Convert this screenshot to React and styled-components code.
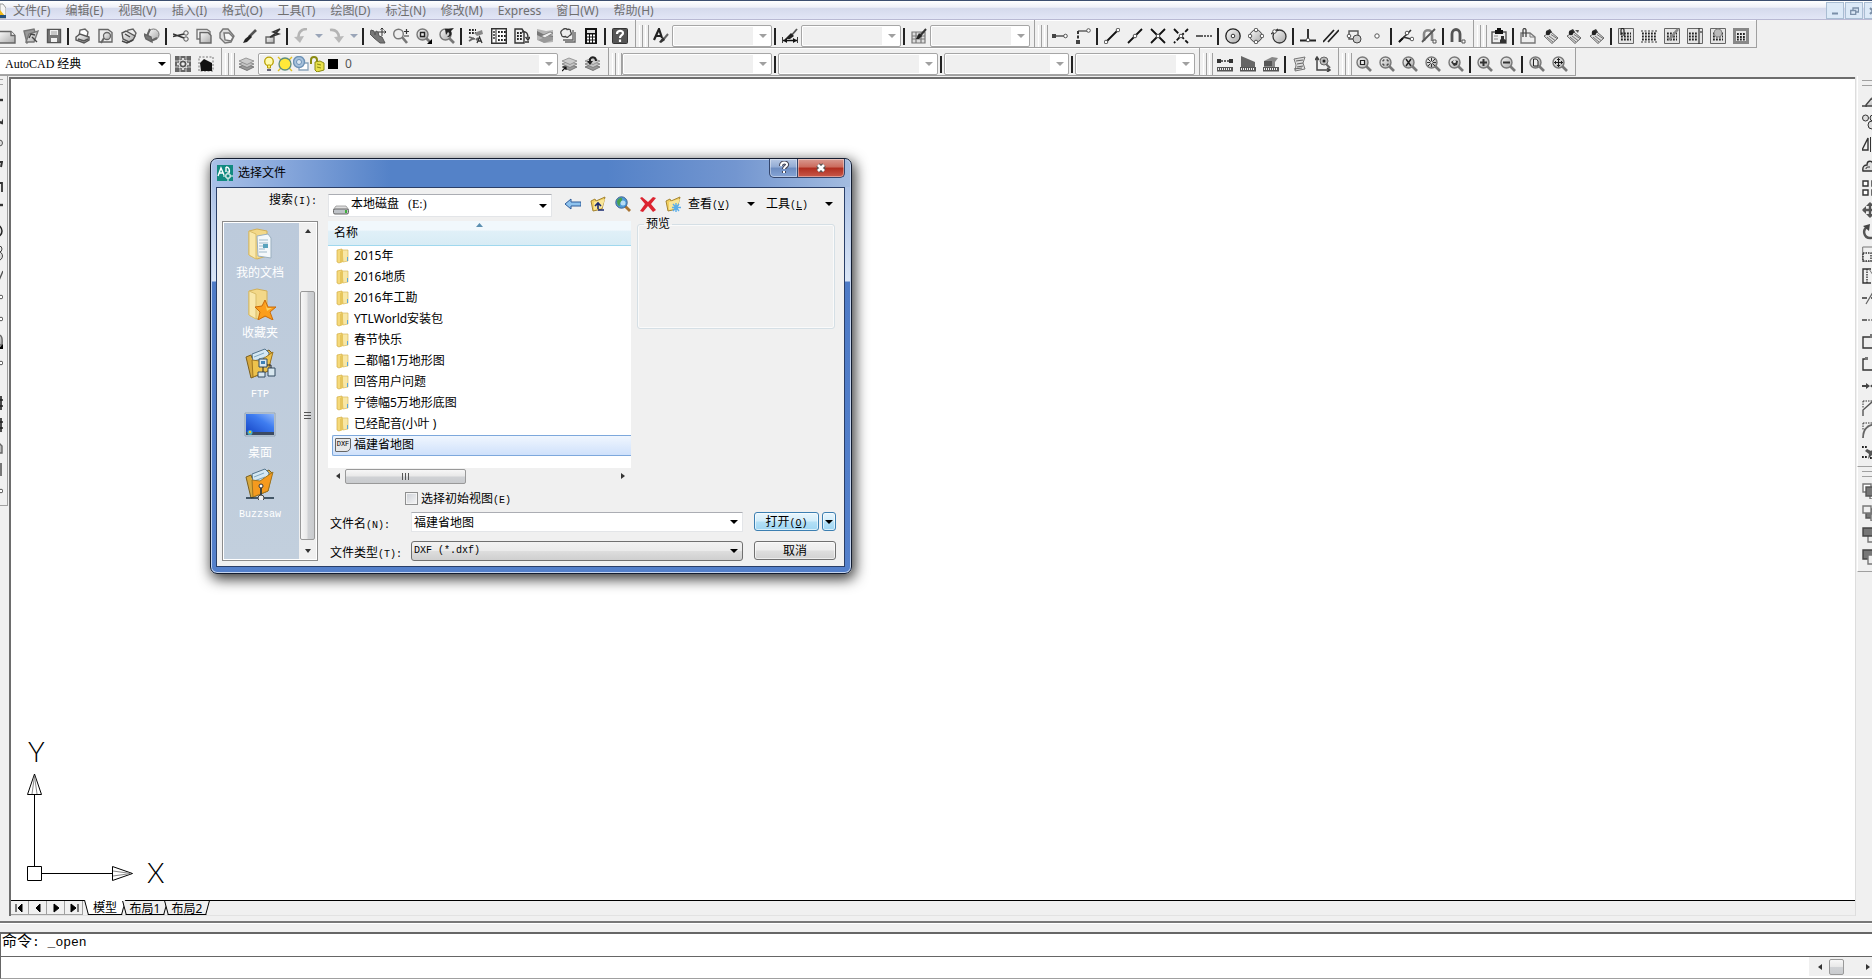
import React from 'react';
import styled, { createGlobalStyle, css } from 'styled-components';

const ui = '"Noto Sans", "Noto Sans CJK SC", sans-serif';
const song = '"Liberation Serif", "Noto Sans CJK SC", serif';
const mono = '"Liberation Mono", "Noto Sans CJK SC", monospace';
const face = '#f0f0f0';
const edge = '#a0a0a0';

const GlobalStyle = createGlobalStyle`
  * { box-sizing: border-box; }
  body { margin: 0; background: ${face}; color: #000; font: 12px/16px ${ui}; overflow: hidden; }
  button, select, input { margin: 0; padding: 0; border: 0; border-radius: 0; background: none; font: inherit; color: inherit; }
  select { appearance: none; }
  svg { display: block; flex: none; }
`;

/* ---------- icon drawings, all on a 16 x 16 grid ---------- */

const L = ({ d, w = 1.4, c = '#333', f = 'none', dash }) => (
  <path d={d} stroke={c} strokeWidth={w} fill={f} strokeDasharray={dash} />
);
const Dot = ({ x, y, r = 1.8 }) => <circle cx={x} cy={y} r={r} fill="#fff" stroke="#555" />;
const Mag = ({ children }) => (
  <>
    <path d="M10.5 10.500L15 15" stroke="#777" strokeWidth="2.600" />
    <circle cx="6.500" cy="6.500" r="5.500" fill="url(#metal)" stroke="#777" strokeWidth="1.400" />
    {children}
  </>
);
const Ruler = () => (
  <>
    <rect x="0" y="11" width="16" height="4.500" fill="#555" />
    <path d="M1 13h14" stroke="#eee" strokeWidth="2" strokeDasharray="1 1" />
  </>
);
const Dots = ({ d = 'M3 5.500h10M3 8.500h10M3 11.500h10' }) => (
  <path d={d} stroke="#222" strokeWidth="1.800" strokeDasharray="1.800 1.200" />
);
const Layers = ({ children }) => (
  <>
    <path d="M0 11l7-3 8 3-7 3.500z" fill="#999" stroke="#666" strokeWidth=".8" />
    <path d="M0 8l7-3 8 3-7 3.500z" fill="#c4c4c4" stroke="#777" strokeWidth=".8" />
    <path d="M0 5l7-3 8 3-7 3.500z" fill="#ccc" stroke="#888" strokeWidth=".8" />
    {children}
  </>
);
const Attach = () => (
  <>
    <path d="M1 8l7-4 7 6-6 5.500z" fill="#ddd" stroke="#666" />
    <path d="M4 9l6 5M6 8l6 4.500M8 6.500l6 4" stroke="#666" strokeWidth=".9" />
    <path d="M0 0l3 3 4-2 2 3-3 2-2-1-1-2z" fill="#333" />
    <circle cx="5" cy="5" r="2.300" fill="#222" />
  </>
);

const icons = {
  page: <><L d="M-1 3.500H11l4 4V15H-1z" f="url(#metal)" c="#666" /><L d="M11 3.500v4h4" c="#666" f="#fff" /></>,
  open: <><L d="M1 3l10-2 1 3-8 11z" f="#999" c="#777" /><L d="M3 14l3-8 9-3-4 11z" f="url(#metal)" c="#777" /><L d="M6 10l2-4 4 1M9 9l5 5" c="#444" /></>,
  save: <><L d="M1.500 1.500h13v13h-13z" f="#777" c="#555" /><path d="M4 2h8v5H4zM5 10h6v4H5z" fill="#f0f0f0" /><L d="M5 4h6M5 6h6" w=".8" c="#888" /></>,
  print: <><L d="M4 8l1-6 5-1 3 3-1 5" f="#fff" c="#666" /><L d="M1 9l4-3 9 3v3l-5 3-8-3z" f="url(#metal)" c="#555" /><L d="M3 11l6 2 4-2" c="#555" /></>,
  preview: <><L d="M1 1.500h9l4 3V14H1z" f="#eee" c="#666" /><circle cx="9" cy="8" r="3.500" fill="url(#metal)" stroke="#666" strokeWidth="1.300" /><L d="M6 10l-3 5" w="2" c="#666" /></>,
  publish: <><L d="M5 7l2-5 5-1 3 4-2 5" f="#eee" c="#666" /><L d="M1 5l4-2 9 5-2 4-4 2-6-3z" f="url(#metal)" c="#555" /><L d="M1 13l5 2 6-3M4 6l5 3" c="#444" /></>,
  globe: <><circle cx="9.500" cy="6.500" r="5.500" fill="url(#metal)" stroke="#777" /><L d="M6 1l-3 7 4 5 6-3" c="#666" w="2" /><L d="M0 6l7 3 1 5-6-3z" f="#777" c="#666" /></>,
  cut: <><L d="M0 6l11 4M0 8.500L11 6" w="1.600" /><circle cx="13" cy="5" r="2.200" fill="none" stroke="#555" /><circle cx="13" cy="11" r="2.200" fill="none" stroke="#555" /></>,
  copy: <><L d="M1 1.500h10l3 2V11H1z" f="#f4f4f4" c="#777" /><L d="M4 4.500h8l3 3V15H4z" f="url(#metal)" c="#666" /></>,
  paste: <><L d="M1 5l3-4 5 0 6 7-3 6-6 1-5-5z" f="#ddd" c="#777" /><L d="M5 5l5 0 4 4-2 4-6-1z" f="#f8f8f8" c="#777" /></>,
  brush: <><L d="M14 2L7 9" w="2.600" c="#555" /><path d="M8 7l2 2-5 5-4 1 2-4z" fill="#222" /></>,
  block: <><L d="M1 9h8v6H1z" f="url(#metal)" c="#666" /><L d="M15 1l-7 3 3 1-6 4 9-3-3-1z" f="#eee" /></>,
  undo: <><L d="M13 1C7 1 3 5 5 12" w="2.600" c="#b4b4b4" /><path d="M0 9l6 6 4-7z" fill="#b9b9b9" /></>,
  redo: <><L d="M1 2c6-1 9 3 9 8" w="2.600" c="#b4b4b4" /><path d="M5 9l5 6 5-7z" fill="#b9b9b9" /></>,
  pan: <><path d="M1 2l3 1 1 4 1-4 2 1 1 4 3 1 3 6-5 0-6-5-4-4z" fill="#777" stroke="#555" /><L d="M12 0v8M8 4h8M10.500 1.500L12 0l1.500 1.500M14.500 2.500L16 4l-1.500 1.500" w="1" /></>,
  zoomRt: <><path d="M9 9l5 6" stroke="#777" strokeWidth="2.600" /><circle cx="5.500" cy="6" r="4.800" fill="#eee" stroke="#777" strokeWidth="1.400" /><L d="M11 3.500h5M13.500 1v5M11 8h5" w="1.200" /></>,
  zoomWin: <><Mag><path d="M4.500 4.500h4v4h-4z" fill="#eee" stroke="#222" strokeWidth="1.400" /></Mag><path d="M16 11v5h-5z" fill="#000" /></>,
  zoomPrev: <Mag><path d="M6 1l9-1-3 3c2 4-1 6-4 6 3-2 3-4 1-5L7 7z" fill="#222" /></Mag>,
  props: <><Dots d="M1 2h7M1 5h7" /><path d="M6 5l8-3 1 4-6 2z" fill="#888" /><L d="M1 9l6 2M1 13l5-3M8 12l2-2" w="1.800" c="#666" /><L d="M9 15l2.500-6L14 15M10 13h3" w="1.300" /></>,
  design: <><L d="M.7.7h14.600v14.600H.7z" f="#fff" /><L d="M5 1v14" c="#666" /><Dots d="M7 4h8M7 8h8M7 12h8" /><L d="M2 4h2M2 7h2M2 10h2" /></>,
  palettes: <><L d="M1 1h7l2 3v11H1z" f="#eee" /><Dots d="M3 5h5M3 8h5M3 11h5" /><L d="M8 4c5-1 6 2 6 6M11.500 9l2.500 3 2-3M11 14h4" /></>,
  sheets: <><path d="M0 1l9 2 7-1v12l-8 1-8-3z" fill="#b5b5b5" /><path d="M0 3l6 3 10 2v4L4 9 0 7z" fill="#777" /><path d="M4 8l9-4 3 1-8 5z" fill="#eee" stroke="#777" strokeWidth=".8" /><path d="M1 12l10-4 5 1v3l-9 3z" fill="#999" /></>,
  markup: <><L d="M5 14h10V4M3 12h10V2" c="#666" /><path d="M3 1.500q3-2 4 0 4-1 3.500 2 2 3-1 4-2 3-4 1-4 1-4-2-2-3 1.500-5z" fill="#eee" stroke="#444" strokeWidth="1.300" /></>,
  calc: <><path d="M2 0h12v16H2z" fill="#111" /><path d="M4 2h8v3H4z" fill="#ddd" /><path d="M4 7.500h8M4 10.500h8M4 13.500h8" stroke="#fff" strokeWidth="1.800" strokeDasharray="2 1" /></>,
  help: <><rect x=".5" y=".5" width="15" height="15" rx="1" fill="#555" stroke="#333" /><path d="M5 6c0-4 6-4 6-1 0 2.500-3 2-3 5M8 11.500V14" fill="none" stroke="#fff" strokeWidth="2.200" /></>,
  textStyle: <><L d="M1 12L6 1l3 9M3 8h5" w="2.200" c="#222" /><L d="M15 6l-5 6" w="2" c="#666" /><path d="M10 9l2 3-4 3-2-1z" fill="#333" /></>,
  dimStyle: <><L d="M0 9v6M16 9v6M1 12.500h14" w="1.600" c="#111" /><path d="M1 12.500l4-2.500v5zM15 12.500l-4-2.500v5z" fill="#111" /><L d="M15 1L9 8" w="1.800" c="#555" /><path d="M9 5l3 3-4 3-5 0z" fill="#222" /></>,
  tableStyle: <><L d="M1 4h13v11H1zM1 8h13M1 11h13M5 4v11M10 4v11" f="#ddd" c="#777" w="1.200" /><L d="M15 1L9 8" w="2" /><path d="M8 5l3 3-3 3-3 0z" fill="#222" /></>,
  track: <><L d="M2 8h10" w="1.500" c="#555" /><path d="M0 6h4v4H0z" fill="#444" /><Dot x={13.500} y={8} /></>,
  from: <><L d="M13 3H3" c="#555" /><L d="M3 3v9" dash="3 1.500" w="2" /><path d="M1 12h4v4H1z" fill="#444" /><Dot x={13.500} y={2.500} /></>,
  endpoint: <><L d="M2 14L13 3" w="1.800" c="#111" /><Dot x={2} y={14} /><Dot x={14} y={2} /></>,
  midpoint: <><L d="M1 15L15 1" w="1.800" c="#111" /><Dot x={8} y={8} /></>,
  intersect: <><L d="M1 1l14 14M15 1L1 15" w="1.800" c="#111" /><Dot x={8} y={8} /></>,
  apparent: <><L d="M1 1l14 14" w="1.800" c="#111" dash="6 2" /><L d="M15 1L1 15" w="1.800" c="#111" dash="4 2" /><Dot x={8} y={8} /></>,
  extend: <><L d="M0 8h7" w="1.400" c="#222" /><L d="M8 8h8" w="1.400" dash="2 1" /></>,
  center: <><circle cx="8" cy="8" r="7.200" fill="url(#metal)" stroke="#222" strokeWidth="1.300" /><circle cx="8" cy="8" r="1.800" fill="#fff" stroke="#333" /></>,
  quadrant: <><circle cx="8" cy="8" r="6" fill="url(#metal)" stroke="#444" /><Dot x={8} y={2} /><Dot x={8} y={14} /><Dot x={2} y={8} /><Dot x={14} y={8} /></>,
  tangent: <><circle cx="8.500" cy="8.500" r="6.500" fill="url(#metal)" stroke="#333" strokeWidth="1.300" /><L d="M0 6l7-5" /><Dot x={3.500} y={3.500} /></>,
  perp: <><L d="M8 1v10M0 12.500h16" w="1.800" c="#222" /><Dot x={8} y={12} /></>,
  parallel: <L d="M0 14L11 2M5 14L16 2" w="1.800" c="#222" />,
  insert: <><L d="M3 3h9v8H3z" f="#eee" c="#555" /><circle cx="11" cy="11" r="4" fill="#ccc" stroke="#444" /><Dot x={3} y={8} /></>,
  node: <Dot x={8} y={8} r={2.200} />,
  nearest: <><L d="M1 14L13 2M5 9l8 2" w="1.600" /><L d="M1 14l4-4" w="2" c="#111" /><Dot x={9} y={5} /><Dot x={14} y={11} /></>,
  snapNone: <><L d="M3 13V6c0-5 8-5 8 0v7" w="2.600" c="#888" /><L d="M1 14L14 1" w="1.800" c="#555" /><path d="M12 12h3v3h-3z" fill="#fff" stroke="#555" /></>,
  snapSet: <><L d="M2 14V6c0-6 8-6 8 0v8" w="2.800" c="#555" /><path d="M12 12h3v3h-3z" fill="#fff" stroke="#555" /></>,
  clip: <><L d="M1 4h14v11H1z" f="#eee" c="#555" /><path d="M4 2h2V0h4v2h2v4H4z" fill="#111" /><path d="M9 15v-3l1-1V8h3v3l2 1v3z" fill="#333" /><L d="M3 8h4M3 11h4" c="#888" w="1" /></>,
  xclip: <><L d="M1 5h9l5 4v6H1z" f="#eee" c="#777" /><L d="M10 5v4h5" c="#777" w="1" /><L d="M3 9V2c0-2 3-2 3 0v7" w="1.300" c="#444" /></>,
  attach: <Attach />,
  attach2: <><Attach /><path d="M9 2l3 3 1-3z" fill="#555" /></>,
  img: <><path d="M.5.500h15v15H.5z" fill="#e4e4e4" stroke="#666" /><Dots /><L d="M3 7V2c0-2 3-2 3 0v6" w="1.200" c="#222" /></>,
  imgClip: <><Dots d="M1 5.500h14M1 8.500h14M1 11.500h14" /><L d="M0 3h16M0 14h16" dash="2 1.500" w="1.200" /></>,
  imgAdjust: <><path d="M.5.500h15v15H.5z" fill="#e4e4e4" stroke="#666" /><Dots /><L d="M14 1L5 12" w="2.600" c="#888" /></>,
  imgQuality: <><path d="M.5.500h15v15H.5z" fill="#e4e4e4" stroke="#666" /><Dots d="M2 5.500h8M2 8.500h8M2 11.500h8" /><L d="M12 0v16M14 3v2" w="1.200" /></>,
  imgTrans: <><path d="M.5.500h15v15H.5z" fill="#e4e4e4" stroke="#666" /><Dots /><circle cx="8" cy="5" r="4" fill="#bbb" stroke="#888" /></>,
  imgFrame: <><path d="M1.500 1.500h13v13h-13z" fill="#e8e8e8" stroke="#888" strokeWidth="3" /><Dots d="M4 6h8M4 9h8M4 11.500h8" /></>,
  gear: <><path d="M0 0h16v16H0z" fill="#666" /><path d="M0 5h3M0 11h3M13 5h3M13 11h3M5 0v3M11 0v3M5 13v3M11 13v3" stroke="#ccc" /><path d="M8 2v12M2 8h12M4 4l8 8M12 4l-8 8" stroke="#ddd" strokeWidth="2.400" /><circle cx="8" cy="8" r="4" fill="#555" stroke="#ddd" /><circle cx="8" cy="8" r="1.800" fill="#eee" /></>,
  home: <><path d="M1 1h14v14H1z" fill="none" stroke="#777" strokeDasharray="2 1.500" /><path d="M2 7l4-4 8 4v8H3z" fill="#111" /></>,
  layers: <Layers />,
  layerMake: <Layers><L d="M0 15l4-4M1 11h3v3" w="1.200" c="#111" /></Layers>,
  layerPrev: <Layers><L d="M5 7V3c2-3 6-2 6 2" w="2" c="#222" /><path d="M2 5h6l-3 4z" fill="#222" /></Layers>,
  distance: <><Ruler /><path d="M0 3h4v4H0zM12 3h4v4h-4z" fill="#333" /><L d="M4 5h8" dash="2 1" /></>,
  area: <><Ruler /><path d="M1 0l14 6v5H1z" fill="#666" /></>,
  mass: <><Ruler /><path d="M1 5l8-4 6 1-3 4v5H1z" fill="#888" /><path d="M1 5h8v5H1z" fill="#555" /></>,
  list: <><path d="M2 3l11-2-2 6 2 6-10 2 1-6z" fill="#ddd" stroke="#777" /><L d="M4 5l7-1M5 8l6-1M5 11l6-1M2 13l8-1" w="1.200" c="#666" /></>,
  locate: <><L d="M2 1v13h13M0 4l2-3 2 3M12 12l3 2-3 2" w="1.500" c="#444" /><circle cx="9" cy="5" r="4" fill="#bbb" stroke="#666" /><path d="M11 8l4 4" stroke="#666" strokeWidth="2" /><circle cx="9" cy="5" r="1.500" fill="#222" /></>,
  zWindow: <Mag><path d="M4.500 4.500h4v4h-4z" fill="#eee" stroke="#222" strokeWidth="1.200" /></Mag>,
  zDynamic: <Mag><path d="M4 5.500V4h1.500M7.500 4H9v1.500M9 7.500V9H7.500M5.500 9H4V7.500" fill="none" stroke="#222" /></Mag>,
  zScale: <Mag><path d="M4 3l5 7M9 3l-5 7" stroke="#222" strokeWidth="1.500" /></Mag>,
  zCenter: <Mag><path d="M3 3l7 7M10 3l-7 7M6.500 2v9M2 6.500h9" stroke="#333" /><circle cx="6.500" cy="6.500" r="1.200" fill="#eee" /></Mag>,
  zObject: <Mag><path d="M3 6l3-2 4 1-1 4-3 1z" fill="#333" /><circle cx="6.500" cy="5.500" r="1.500" fill="#eee" /></Mag>,
  zIn: <Mag><path d="M6.500 3v7M3 6.500h7" stroke="#333" strokeWidth="2" /></Mag>,
  zOut: <Mag><path d="M3 6.500h7" stroke="#333" strokeWidth="2" /></Mag>,
  zAll: <Mag><path d="M4.500 3h3l1.500 2v5h-4.500z" fill="#eee" stroke="#222" /></Mag>,
  zExtents: <Mag><path d="M6.500 2v9M2 6.500h9M5 3.500h3M5 9.500h3M3.500 5v3M9.500 5v3" stroke="#222" /></Mag>,
  bulb: <><circle cx="8" cy="5.500" r="4.300" fill="#fffbb0" stroke="#b8a000" strokeWidth="1.300" /><path d="M6.500 9h3v3h-3z" fill="#fff27a" stroke="#b8a000" /><path d="M6 13h4v2H6z" fill="#667" /></>,
  sun: <><path d="M1 1l3 3M15 1l-3 3M1 15l3-3M15 15l-3-3" stroke="#e0c020" strokeWidth="1.400" /><circle cx="8" cy="8" r="6" fill="#ffe838" stroke="#5f8d7d" strokeWidth="1.300" /></>,
  sunVp: <><path d="M6 7h9v7H6z" fill="#fff" stroke="#8aa4bb" strokeWidth="1.300" /><circle cx="6" cy="6" r="5.500" fill="#a6c1dc" stroke="#6d92b6" strokeWidth="1.400" /><circle cx="6" cy="6" r="2.500" fill="#dbe7f2" stroke="#6d92b6" /></>,
  lock: <><path d="M2 8V4c0-4 6-4 6 0v4" fill="none" stroke="#8a8a10" strokeWidth="2" /><path d="M6 6l5-1 4 2v7l-7 2-2-2z" fill="#e8e04a" stroke="#8a8a10" /><path d="M8 8l4 1M8 11l4 1" stroke="#8a8a10" /></>,
  swatch: <path d="M3 3h10v10H3z" fill="#000" />,
  erase: <><L d="M0 14h5" /><L d="M4 13l5-6h7v3l-3 4H4z" f="url(#metal)" c="#444" /><path d="M9 7l3-4h4v5z" fill="#999" stroke="#555" /></>,
  copyObj: <><circle cx="3.500" cy="4" r="3" fill="#ddd" stroke="#333" /><circle cx="11" cy="4" r="3" fill="#ddd" stroke="#333" /><circle cx="10" cy="11" r="4" fill="#ddd" stroke="#333" /></>,
  mirror: <><L d="M6 2v12H0z" /><L d="M8.500 1v15" w="1" /><L d="M11 2v12h5z" /></>,
  offset: <><L d="M1 13c-1-5 2-6 4-6 0-5 6-5 6 0v6z" f="#ddd" /><L d="M4 11c0-2 1-2 4-2" w="1" /></>,
  array: <L d="M1 1h5v5H1zM10 1h5v5h-5zM1 10h5v5H1zM10 10h5v5h-5z" f="#fff" />,
  move: <><L d="M8 1v14M1 8h14" w="2.400" c="#555" /><path d="M0 8l4-4v8zM8 0l4 4H4zM8 16l4-4H4z" fill="#555" /></>,
  rotate: <><L d="M5 3C0 6 2 14 8 14c7 0 8-8 4-11" w="2.400" c="#555" /><path d="M1 2l7-2-1 7z" fill="#444" /></>,
  scale: <><L d="M.7 1h15v15H.7z" w="1" c="#777" /><L d="M1 7h8v8H1z" dash="1.500 1" /></>,
  stretch: <><L d="M9 1H1v14h8" /><L d="M5 1v14" dash="1.500 1" /><L d="M7 1l4 6 4-6" w="1" c="#777" /></>,
  trim: <><L d="M0 8h5M9 8h4" /><L d="M4 14L11 2h5" c="#666" w="1.200" /></>,
  extendObj: <><L d="M0 8h5" /><L d="M6 8h10" dash="2 1" c="#777" /></>,
  breakPt: <><L d="M14 3H1v11h15" f="#eee" /><path d="M8 0h4v4H8z" fill="#777" /></>,
  breakObj: <><L d="M4 3H1v11h15" /><path d="M3 1h3v3H3z" fill="#777" /></>,
  join: <><L d="M0 8h6M10 8h6" w="1.800" c="#444" /><path d="M4 5l4 3-4 3zM12 5L8 8l4 3z" fill="#444" /></>,
  chamfer: <><L d="M1 1h15M1 1v7" dash="1.500 1" w="1" /><L d="M1 16V10l9-8h6" c="#555" /></>,
  fillet: <><L d="M1 1h15M1 1v7" dash="1.500 1" w="1" /><L d="M1 16c0-9 5-14 15-14" w="1.800" c="#666" /></>,
  explode: <><path d="M5 5l4 2 4-4-1 5 3 4-5-1-4 4 1-5-4-3z" fill="#555" /><Dots d="M0 3h6M0 13h6M8 14h6" /></>,
  front: <><L d="M1 1h8v8H1z" f="#fff" c="#777" /><L d="M8 8h8v8H8z" f="#fff" c="#777" /><L d="M4 4h9v9H4z" f="#777" c="#555" /></>,
  back: <><L d="M4 4h9v9H4z" f="#777" c="#555" /><L d="M1 1h8v7H1z" f="#eee" c="#777" /><L d="M9 9h7v7H9z" f="#eee" c="#777" /></>,
  above: <><L d="M6 6h9v9H6z" f="#eee" c="#777" /><L d="M1 1h14v8H1z" f="#777" c="#444" /></>,
  under: <><L d="M1 1h13v9H1z" f="#777" c="#444" /><L d="M6 6h9v9H6z" f="#eee" c="#777" /></>,
  dLine: <L d="M13 9h3" w="2.400" />,
  dXline: <L d="M12 9l3 1 2-4" w="2.400" />,
  dPoly: <circle cx="12.500" cy="8" r="3" fill="#ddd" stroke="#555" />,
  dPolygon: <L d="M12 5l3 0-1 5" w="2" />,
  dRect: <L d="M2 4h13v9" w="1.800" />,
  dArc: <L d="M12 4h4" w="2.400" />,
  dCircle: <circle cx="9" cy="8" r="6" fill="#ddd" stroke="#222" strokeWidth="1.500" />,
  dCloud: <><circle cx="12" cy="4" r="3" fill="#eee" stroke="#444" /><circle cx="11" cy="11" r="4.500" fill="#ddd" stroke="#444" /></>,
  dSpline: <L d="M11 6l2 5 3-7" c="#555" />,
  dHatch: <L d="M14 1v14M10 5h6M10 11h6" w="1.600" c="#222" />,
  dInsert: <><L d="M2 2h10q4 0 3 10H2z" f="url(#metal)" c="#666" /><path d="M16 11v5h-5z" fill="#000" /></>,
  dRegion: <L d="M2 4h10l3 3v7H2z" f="#bbb" c="#666" />,
  dTable: <path d="M2 2h13v13H2z" fill="#777" />,
  dDot: <Dot x={14} y={8} />,
  back2: <path d="M0 8l6-5v3h10v4H6v3z" fill="#8fc3ee" stroke="#2c5a99" />,
  up: <><path d="M1 5l4-2 1 2 9-4-3 12-9 2z" fill="#f2d060" stroke="#a58532" /><path d="M4 6l11-3-3 9-8 2z" fill="#f9e69a" /><path d="M8 13V8M5 10l3-3 3 3M8 14h6" stroke="#1a2a70" strokeWidth="1.600" fill="none" /></>,
  web: <><path d="M10 10l5 5" stroke="#a87432" strokeWidth="2.800" /><circle cx="6.500" cy="6.500" r="5.700" fill="#4d9ad8" stroke="#3d6090" /><path d="M2 5c2-4 6-4 5-1s-3 3-2 6c-2 0-3-2-3-5z" fill="#49a04f" /><circle cx="8" cy="7" r="2.500" fill="#b5dcf6" /></>,
  del: <path d="M2 1l6 5 5-5 3 1-5 6 5 6-3 2-5-6-5 6-3-1 5-7-5-6z" fill="#dc2430" />,
  folderNew: <><path d="M1 5l4-2 1 2 9-4-3 12-9 2z" fill="#f2d060" stroke="#a58532" /><path d="M4 6l11-3-3 9-8 2z" fill="#f9e69a" /><path d="M11 7v9M7 11.500h9M8 8l6 7M14 8l-6 7" stroke="#5aaeea" strokeWidth="1.400" /></>,
  folder: <><path d="M2 2l5-1 1 12-4 2-2-1z" fill="#f5d97a" stroke="#d3ad45" strokeWidth=".7" /><path d="M7 2h6v11l-5 1z" fill="#f8e7a5" stroke="#d9b95b" strokeWidth=".7" /><path d="M5 3l3-1v12l-3 1z" fill="#e6c55c" /><path d="M12.500 9v4" stroke="#5aa6dc" /></>,
  drive: <><path d="M3 6h10l3 4H0z" fill="#ddd" stroke="#888" strokeWidth=".7" /><rect x=".5" y="9" width="15" height="5" rx="1.500" fill="#bfc3c8" stroke="#666" /><path d="M12 10h2v3h-2z" fill="#3fae3c" /></>,
  cad: <><path d="M0 0h16v16H0z" fill="#128a80" /><path d="M1 11L4 3l3 7M2 8h4M9 2v5M9 2c3 0 4 3 3 6" stroke="#fff" strokeWidth="1.400" fill="none" /><path d="M9 9h4v4H9zM11 6v3M11 13v3M6 11h3M13 11h3" stroke="#fff" fill="none" /></>,
};

const Icon = ({ name, size = 16 }) => (
  <svg width={size} height={size} viewBox="0 0 16 16" aria-hidden="true">{icons[name]}</svg>
);

const Triangle = ({ color = '#000' }) => (
  <svg width="8" height="4" viewBox="0 0 8 4" aria-hidden="true"><path d="M0 0h8L4 4z" fill={color} /></svg>
);
const SmallArrow = ({ turn = 0 }) => (
  <svg width="8" height="8" viewBox="0 0 8 8" aria-hidden="true">
    <path d="M1 6l3-4 3 4z" fill="#333" transform={`rotate(${turn} 4 4)`} />
  </svg>
);

/* Half-width Latin letters set between full-width Chinese ones */
const Latin = styled.span`
  font: 10px/1 ${mono};
`;
const SongText = ({ children, hotkey }) => (
  <span>
    {children.split(/([\x20-\x7e]+)/).map((part, i) => (i % 2
      ? <Latin key={i}>{hotkey ? <>(<u>{part[1]}</u>)</> : part}</Latin>
      : part))}
  </span>
);

/* ---------- application frame ---------- */

const Window = styled.div`
  display: flex;
  flex-direction: column;
  height: 100vh;
  border-top: 1px solid #3c4f70;
  overflow: hidden;
`;
const MenuBar = styled.nav`
  display: flex;
  flex: none;
  height: 19px;
  background: linear-gradient(#fff 0, #eef0f8 35%, #d5daec 40%, #e2e6f6 100%);
  border-bottom: 1px solid #b9b9d3;
`;
const MenuLogo = styled.span`
  width: 6px;
  margin: 2px 7px 0 0;
`;
const MenuItem = styled.button`
  flex: none;
  margin-right: 15px;
  line-height: 19px;
  color: #6f6f6f;
  white-space: nowrap;
`;
const WindowButtons = styled.div`
  display: flex;
  gap: 1px;
  width: 46px;
  margin-left: auto;
  padding-top: 1px;
  overflow: hidden;
`;
const WindowButton = styled.button`
  display: grid;
  place-items: center;
  flex: none;
  width: 18px;
  height: 17px;
  border: 1px solid #a9bdd3;
  background: #dce9f7;
`;

const ToolRow = styled.div`
  display: flex;
  flex: none;
  height: 28px;
`;
const Toolbar = styled.div`
  display: flex;
  align-items: center;
  flex: none;
  padding: 5px 4px 0 0;
  border: solid ${edge};
  border-width: 0 1px 1px 0;
  box-shadow: inset 0 1px #fff;
  margin-left: ${(p) => (p.$clipped ? '-4px' : '0')};
`;
const Grip = styled.span`
  display: flex;
  gap: 2px;
  width: 13px;
  height: 22px;
  padding-left: 3px;
  &::before, &::after {
    content: '';
    width: 3px;
    border-left: 1px solid #fff;
    border-right: 1px solid ${edge};
  }
`;
const ToolButton = styled.button`
  display: grid;
  place-items: center;
  width: ${(p) => (p.$narrow ? '12px' : '23px')};
  height: 22px;
`;
const Divider = styled.span`
  width: 2px;
  height: 17px;
  margin: 0 2px;
  background: #222;
`;
const ComboBox = styled.span`
  display: flex;
  align-items: center;
  width: ${(p) => p.$width}px;
  height: 22px;
  border: 1px solid #a6a6a6;
  border-radius: 2px;
  background: ${(p) => (p.$active ? '#fff' : face)};
  box-shadow: inset -18px 0 #fff, inset 0 0 0 1px #fff;
`;
const ComboSelect = styled.select`
  flex: 1;
  min-width: 0;
  height: 20px;
  padding-left: 4px;
  color: #555;
  outline: 0;
`;
const WorkspaceSelect = styled(ComboSelect)`
  padding-left: 8px;
  color: #000;
  font-family: ${song};
`;
const ArrowBox = styled.span`
  display: grid;
  place-items: center;
  width: 16px;
`;
const LayerIcons = styled.span`
  display: flex;
  padding-left: 2px;
`;

const Middle = styled.main`
  display: flex;
  flex: 1;
  min-height: 0;
`;
const Dock = styled.aside`
  display: flex;
  flex-direction: column;
  flex: none;
  width: ${(p) => (p.$side === 'left' ? '9px' : '17px')};
  overflow: hidden;
`;
const DockBar = styled.div`
  display: flex;
  flex-direction: column;
  align-items: ${(p) => (p.$side === 'left' ? 'flex-end' : 'flex-start')};
  padding: ${(p) => (p.$side === 'left' ? '3px 4px 3px 0' : '4px 0 3px 4px')};
  border-bottom: 1px solid ${edge};
  ${(p) => (p.$side === 'left'
    ? css`border-right: 1px solid ${edge}; margin-right: 1px;`
    : css`border-left: 1px solid #fff; margin-left: 2px;`)}
`;
const DockGrip = styled.span`
  width: 16px;
  height: 6px;
  margin-bottom: 3px;
  border: solid ${edge};
  border-width: 1px 0;
`;
const DockButton = styled.button`
  display: grid;
  place-items: center;
  flex: none;
  width: 16px;
  height: 22px;
`;
const DockSpace = styled.span`
  height: ${(p) => p.$size}px;
`;
const Document = styled.section`
  display: flex;
  flex-direction: column;
  flex: 1;
  min-width: 0;
  margin: 1px 0 5px;
  border: solid #6d6d6d;
  border-width: 2px 0 0 2px;
  box-shadow: 1px 0 #ddd;
`;
const Canvas = styled.div`
  position: relative;
  display: flex;
  align-items: flex-end;
  flex: 1;
  min-height: 0;
  padding: 0 0 8px 14px;
  background: #fff;
  border-bottom: 1px solid #000;
`;
const TabStrip = styled.nav`
  display: flex;
  flex: none;
  height: 15px;
  border-bottom: 1px solid #e2e2e2;
`;
const PageButton = styled.button`
  display: grid;
  place-items: center;
  width: 18px;
  border-right: 1px solid ${edge};
  border-bottom: 1px solid ${edge};
`;
const LayoutTab = styled.button`
  position: relative;
  width: ${(p) => (p.$active ? '38px' : '42px')};
  height: ${(p) => (p.$active ? '15px' : '14px')};
  margin-top: ${(p) => (p.$active ? '-1px' : '0')};
  margin-left: ${(p) => (p.$active ? '3px' : '0')};
  line-height: 13px;
  white-space: nowrap;
  isolation: isolate;
  &::before, &::after {
    content: '';
    position: absolute;
    z-index: -1;
    top: 0;
    bottom: 0;
    border-bottom: 1px solid #000;
    background: ${(p) => (p.$active ? '#fff' : face)};
  }
  &::before { left: 0; right: 50%; border-left: 1px solid #000; transform: skewX(15deg); }
  &::after { right: 0; left: 45%; border-right: 1px solid #000; transform: skewX(-15deg); }
`;

const CommandPanel = styled.footer`
  flex: none;
  border-top: 2px solid #777;
`;
const Splitter = styled.div`
  height: 9px;
  border-top: 1px solid #fff;
`;
const CommandLog = styled.div`
  height: 25px;
  padding-left: 1px;
  border: solid #666;
  border-width: 2px 0 1px 1px;
  background: #fff;
  font: 13px/17px ${mono};
`;
const LogPrompt = styled.span`
  font-size: 15px;
`;
const CommandLine = styled.div`
  display: flex;
  height: 22px;
  border-left: 1px solid #666;
  border-bottom: 1px solid ${edge};
  box-shadow: inset 0 -1px #fff;
  background: #fff;
`;
const CommandInput = styled.input`
  flex: 1;
  min-width: 0;
  outline: 0;
`;
const CommandScroll = styled.div`
  display: flex;
  align-items: center;
  width: 63px;
  height: 19px;
  padding-left: 7px;
  background: ${face};
`;
const CommandThumbGap = styled.span`
  width: 5px;
`;
const ScrollButton = styled.button`
  display: grid;
  place-items: center;
  width: 15px;
  height: 15px;
`;
const Thumb = styled.span`
  display: grid;
  place-items: center;
  border: 1px solid #999;
  border-radius: 2px;
  width: ${(p) => p.$w}px;
  height: ${(p) => p.$h}px;
  background: linear-gradient(${(p) => (p.$upright ? '90deg' : '180deg')}, #f7f7f7, #e8e8e8 48%, #d0d2d5 52%, #c9cbce);
`;
const Push = styled.span`
  flex: 1;
`;

/* ---------- file dialog ---------- */

const DialogWindow = styled.section`
  position: absolute;
  left: 199px;
  top: 79px;
  width: 642px;
  display: flex;
  flex-direction: column;
  padding: 0 6px 6px 5px;
  border: 1px solid #141d30;
  border-radius: 7px;
  background:
    linear-gradient(90deg, #a9c1e8 0, #7fa1d8 14%, #5482c8 28%, #5482c8 62%, #7396d0 82%, #a3bce0 100%) 0 0 / 100% 28px no-repeat,
    linear-gradient(#9db7e2, #dbe6f6 122px, #4f7bc6 123px, #5480cb);
  box-shadow: inset 0 0 0 1px #c3d3ee, 2px 4px 14px 1px rgba(0, 0, 0, 0.8);
`;
const TitleBar = styled.header`
  display: flex;
  align-items: flex-start;
  height: 28px;
  padding-left: 1px;
`;
const TitleIcon = styled.span`
  margin: 6px 5px 0 0;
`;
const Title = styled.h1`
  flex: 1;
  margin: 6px 0 0;
  font: 12px/16px ${ui};
`;
const CaptionButton = styled.button`
  display: grid;
  place-items: center;
  width: ${(p) => (p.$close ? '48px' : '29px')};
  height: 19px;
  border: 1px solid #34466d;
  border-top: 0;
  margin-left: -1px;
  border-radius: ${(p) => (p.$close ? '0 0 5px 0' : '0 0 0 5px')};
  background: ${(p) => (p.$close
    ? 'linear-gradient(#d99a90, #cb6a5c 45%, #b02d1e 50%, #c8594a)'
    : 'linear-gradient(#b6c8e4, #92abd4 45%, #6c8cc0 50%, #86a4d6)')};
  box-shadow: inset 0 0 0 1px rgba(255, 255, 255, 0.4);
`;
const DialogBody = styled.div`
  padding: 6px 8px 5px 5px;
  border: 1px solid #2a3f68;
  background: ${face};
  font-family: ${song};
`;
const LookIn = styled.div`
  display: flex;
  align-items: flex-start;
  height: 27px;
`;
const LookInLabel = styled.label`
  flex: none;
  width: 59px;
  margin-left: 47px;
  line-height: 12px;
`;
const Field = styled.span`
  display: flex;
  align-items: center;
  flex: none;
  min-width: 0;
  width: ${(p) => p.$width || 'auto'};
  height: ${(p) => p.$height || 20}px;
  padding: 0 0 0 2px;
  border: 1px solid #e3e5e8;
  border-top-color: #abadb3;
  background: #fff;
  ${(p) => p.$raised && css`
    border: 1px solid #707070;
    border-radius: 3px;
    background: linear-gradient(#f2f2f2, #ebebeb 48%, #dddddd 52%, #cfcfcf);
  `}
`;
const FieldSelect = styled.select`
  flex: 1;
  min-width: 0;
  height: 18px;
  outline: 0;
`;
const DriveSelect = styled(FieldSelect)`
  align-self: flex-start;
`;
const TypeSelect = styled(FieldSelect)`
  font: 10px/18px ${mono};
`;
const FieldInput = styled.input`
  flex: 1;
  min-width: 0;
  height: 18px;
  font-family: ${ui};
  outline: 0;
`;
const DriveMark = styled.span`
  padding: 5px 2px 0 2px;
`;
const LookTools = styled.div`
  display: flex;
  flex: none;
  margin-left: 8px;
`;
const LookButton = styled.button`
  display: grid;
  place-items: center;
  width: 25px;
  height: 20px;
`;
const LookMenu = styled.button`
  display: flex;
  align-items: center;
  justify-content: space-between;
  width: 73px;
  height: 20px;
  padding: 0 3px;
  & + & { margin-left: 5px; }
`;
const Split = styled.div`
  display: grid;
  grid-template-columns: 96px 1fr;
  gap: 10px;
`;
const Places = styled.nav`
  display: flex;
  border: 1px solid #8b8b8b;
  padding: 1px;
  background: #fff;
`;
const PlaceList = styled.div`
  display: flex;
  flex-direction: column;
  flex: 1;
  padding: 5px 3px 0 0;
  background: linear-gradient(#bccadb, #c2cfdd);
`;
const Place = styled.button`
  display: flex;
  flex-direction: column;
  align-items: center;
  height: 60px;
  color: #fff;
  line-height: 16px;
`;
const PlacePicture = styled.span`
  height: 37px;
`;
const VerticalScroll = styled.div`
  display: flex;
  flex-direction: column;
  align-items: center;
  width: 17px;
  padding: 4px 0;
  background: ${face};
`;
const VerticalTrack = styled.span`
  display: flex;
  align-items: flex-end;
  flex: 1;
  padding-bottom: 7px;
`;
const Browse = styled.div`
  display: grid;
  grid-template-columns: 303px 1fr;
  gap: 6px;
  height: 263px;
`;
const Listing = styled.div`
  display: flex;
  flex-direction: column;
  background: #fff;
`;
const FileTable = styled.table`
  width: 100%;
  border-collapse: collapse;
  font-family: ${ui};
`;
const NameHeader = styled.th`
  height: 24px;
  padding: 0 6px;
  border-bottom: 1px solid #a0d8ee;
  background: linear-gradient(#f1f8fc 38%, #e0f0f8 42%, #d8ecf5);
  font-weight: 400;
  text-align: left;
`;
const HeaderInner = styled.span`
  display: grid;
  grid-template-columns: 142px 1fr;
  height: 22px;
  line-height: 22px;
`;
const FileCell = styled.td`
  height: 21px;
  padding: 0 0 0 4px;
`;
const FileRow = styled.span`
  display: flex;
  align-items: center;
  gap: 3px;
  height: 21px;
  padding-left: 2px;
  border: 1px solid transparent;
  border-right: 0;
  border-radius: 2px 0 0 2px;
  ${(p) => p.$selected && css`
    border-color: #7da8dc;
    background: linear-gradient(#f0f6fe, #cfe1fb);
  `}
`;
const DxfBadge = styled.span`
  width: 16px;
  height: 14px;
  border: 1px solid #666;
  border-radius: 1px 1px 5px 1px;
  background: #e8e8e8;
  font: 7px/10px ${mono};
  text-align: center;
`;
const HorizontalScroll = styled.div`
  display: flex;
  align-items: center;
  height: 16px;
  margin-top: auto;
  padding: 0 1px 0 2px;
  background: ${face};
`;
const Preview = styled.fieldset`
  height: 111px;
  min-width: 0;
  margin: -3px 1px 0 0;
  padding: 0;
  border: 1px solid #d5dfe5;
  border-radius: 3px;
  box-shadow: inset 0 0 0 1px #fafafa;
`;
const PreviewLegend = styled.legend`
  margin-left: 6px;
  padding: 0 2px;
  font-family: ${ui};
  line-height: 12px;
`;
const CheckRow = styled.label`
  display: flex;
  align-items: center;
  gap: 3px;
  height: 13px;
  margin: 8px 0 7px 77px;
`;
const CheckBox = styled.input`
  appearance: none;
  width: 13px;
  height: 13px;
  border: 1px solid #8e8f8f;
  background: linear-gradient(135deg, #cbcfd5, #f6f6f6);
  box-shadow: inset 0 0 0 1px #f4f4f4;
`;
const Form = styled.div`
  display: grid;
  grid-template-columns: 72px 1fr 82px;
  grid-auto-rows: 20px;
  column-gap: 11px;
  row-gap: 9px;
`;
const FormLabel = styled.label`
  padding-left: 2px;
  line-height: 24px;
  white-space: nowrap;
`;
const ButtonPair = styled.div`
  display: flex;
  gap: 3px;
`;
const PushButton = styled.button`
  display: grid;
  place-items: center;
  width: ${(p) => p.$width || '100%'};
  height: 19px;
  border: 1px solid ${(p) => (p.$primary ? '#3c7fb1' : '#707070')};
  border-radius: 3px;
  background: ${(p) => (p.$primary
    ? 'linear-gradient(#e8f6fd, #d3edfa 48%, #b4e0f6 52%, #9fd6f3)'
    : 'linear-gradient(#f3f3f3, #ececec 48%, #dedede 52%, #d2d2d2)')};
  box-shadow: inset 0 0 0 1px rgba(255, 255, 255, 0.6);
`;

/* ---------- place pictures, 32 x 32 ---------- */

const FolderBack = () => (
  <>
    <path d="M5 3l8-2 10 2v25l-10 3-8-4z" fill="#f3d888" stroke="#d1af58" />
    <path d="M5 3l7 3v25l-7-4z" fill="#f9e8ab" stroke="#d9bd6a" />
  </>
);
const OpenFolder = ({ color }) => (
  <>
    <path d="M2 9l5-2 1 3 17-8 3 3-4 18-17 7z" fill="#d8a93d" stroke="#7c6020" />
    <path d="M8 6l13-5 4 4-2 15-13 3z" fill="#d5e8f3" stroke="#55758c" />
    <path d="M10 9l10-4M10 13l11-4" stroke="#7fa5bd" />
    <path d="M8 12l8 1 13-9-5 19-15 6z" fill={color} stroke="#a07620" />
  </>
);
const placeArt = {
  docs: <><FolderBack /><path d="M13 8l11-2 3 4v20l-13-2z" fill="#f4f8fb" stroke="#9bb0c0" /><path d="M15 12h9M15 15h9M15 18h9M15 21h6M15 24h8" stroke="#9fb9c9" /><path d="M19 16h5v4h-5z" fill="#59a3bd" /></>,
  favs: <><FolderBack /><path d="M21 12l3 7 8 0-6 5 3 8-8-4-7 4 2-8-5-5 7-1z" fill="#fb9e1c" stroke="#c96b0a" /><path d="M21 15l2 5 5 0-5 3z" fill="#ffd25c" /></>,
  ftp: <><OpenFolder color="#edc24c" /><path d="M15 11h8v8h-8zM24 20h7v8h-7zM14 24h7v5h-7z" fill="#d8e7ef" stroke="#334b60" /><path d="M17 13h4v3h-4z" fill="#3c7fb5" /><path d="M19 19v5M23 17h4v3" stroke="#222" fill="none" /></>,
  desktop: <><path d="M1 5h30v23H1z" fill="#c9d5e0" stroke="#93a4b5" /><path d="M2 6h28v18H2z" fill="url(#desk)" /><path d="M2 24h28v3H2z" fill="#3c4a62" /><circle cx="6" cy="24.500" r="2.500" fill="#49b0c8" /><path d="M5 23h2v2H5z" fill="#f0c030" /></>,
  buzz: <><OpenFolder color="#f59a1e" /><path d="M17 18v10M2 30h28" stroke="#1b3040" strokeWidth="1.600" /><circle cx="17" cy="18" r="2" fill="#fff" stroke="#333" /><circle cx="17" cy="30" r="3" fill="#eee" stroke="#444" /></>,
};

const Combo = ({ width, label }) => (
  <ComboBox $width={width}>
    <ComboSelect aria-label={label}><option /></ComboSelect>
    <ArrowBox><Triangle color="#a0a0a0" /></ArrowBox>
  </ComboBox>
);

/* '|' is a divider, 'v' a drop-down arrow */
const Tools = ({ names }) => names.split(' ').map((n, i) => {
  if (n === '|') return <Divider key={i} />;
  if (n === 'v') return <ToolButton key={i} $narrow aria-label="menu"><Triangle color="#9aa5b8" /></ToolButton>;
  return <ToolButton key={i} aria-label={n}><Icon name={n} /></ToolButton>;
});

const DockTools = ({ names }) => names.split(' ').map((n, i) => (
  n === '-' ? <DockSpace key={i} $size={18} /> : <DockButton key={i} aria-label={n}><Icon name={n} /></DockButton>
));

const menus = ['文件(F)', '编辑(E)', '视图(V)', '插入(I)', '格式(O)', '工具(T)', '绘图(D)', '标注(N)', '修改(M)', 'Express', '窗口(W)', '帮助(H)'];
const folders = ['2015年', '2016地质', '2016年工勘', 'YTLWorld安装包', '春节快乐', '二都幅1万地形图', '回答用户问题', '宁德幅5万地形底图', '已经配音(小叶 )'];
const places = [['docs', '我的文档'], ['favs', '收藏夹'], ['ftp', 'FTP'], ['desktop', '桌面'], ['buzz', 'Buzzsaw']];
const pageSteps = ['M2 1v8M8 1v8L4 5z', 'M8 1v8L4 5z', 'M4 1v8l5-4z', 'M3 1v8l5-4zM10 1v8'];

function OpenDialog() {
  return (
    <DialogWindow role="dialog" aria-labelledby="dialog-title">
      <TitleBar>
        <TitleIcon><Icon name="cad" /></TitleIcon>
        <Title id="dialog-title">选择文件</Title>
        <CaptionButton aria-label="Help">
          <svg width="12" height="14" viewBox="0 0 12 14"><path d="M3 5c0-5 7-4 6-1-1 2-3 2-3 4M6 10v2" fill="none" stroke="#445" strokeWidth="4" /><path d="M3 5c0-5 7-4 6-1-1 2-3 2-3 4M6 10v2" fill="none" stroke="#fff" strokeWidth="2" /></svg>
        </CaptionButton>
        <CaptionButton $close aria-label="Close">
          <svg width="12" height="10" viewBox="0 0 12 10"><path d="M3 2l6 6M9 2L3 8" stroke="#555" strokeWidth="5" /><path d="M3 2l6 6M9 2L3 8" stroke="#fff" strokeWidth="2.600" /></svg>
        </CaptionButton>
      </TitleBar>
      <DialogBody>
        <LookIn>
          <LookInLabel htmlFor="look-in"><SongText>搜索(I):</SongText></LookInLabel>
          <Field $width="224px" $height={23}>
            <DriveMark><Icon name="drive" /></DriveMark>
            <DriveSelect id="look-in"><option>{'本地磁盘\u00a0\u00a0\u00a0(E:)'}</option></DriveSelect>
            <ArrowBox><Triangle /></ArrowBox>
          </Field>
          <LookTools>
            {['back2', 'up', 'web', 'del', 'folderNew'].map((n) => (
              <LookButton key={n} aria-label={n}><Icon name={n} /></LookButton>
            ))}
            <LookMenu><SongText hotkey>查看(V)</SongText><Triangle /></LookMenu>
            <LookMenu><SongText hotkey>工具(L)</SongText><Triangle /></LookMenu>
          </LookTools>
        </LookIn>
        <Split>
          <Places>
            <PlaceList>
              {places.map(([art, name]) => (
                <Place key={art}>
                  <PlacePicture><svg width="32" height="32" viewBox="0 0 32 32">{placeArt[art]}</svg></PlacePicture>
                  <SongText>{name}</SongText>
                </Place>
              ))}
            </PlaceList>
            <VerticalScroll>
              <SmallArrow />
              <VerticalTrack>
                <Thumb $upright $w={15} $h={249}>
                  <svg width="7" height="8" viewBox="0 0 7 8"><path d="M0 .5h7M0 3.500h7M0 6.500h7" stroke="#555" /></svg>
                </Thumb>
              </VerticalTrack>
              <SmallArrow turn={180} />
            </VerticalScroll>
          </Places>
          <div>
            <Browse>
              <Listing>
                <FileTable>
                  <thead>
                    <tr>
                      <NameHeader>
                        <HeaderInner>名称<svg width="7" height="5" viewBox="0 0 7 5"><path d="M0 5l3.500-4L7 5z" fill="#5b8fb0" /></svg></HeaderInner>
                      </NameHeader>
                    </tr>
                  </thead>
                  <tbody>
                    {folders.map((name) => (
                      <tr key={name}><FileCell><FileRow><Icon name="folder" />{name}</FileRow></FileCell></tr>
                    ))}
                    <tr><FileCell><FileRow $selected><DxfBadge>DXF</DxfBadge>福建省地图</FileRow></FileCell></tr>
                  </tbody>
                </FileTable>
                <HorizontalScroll>
                  <ScrollButton aria-label="Scroll left"><SmallArrow turn={-90} /></ScrollButton>
                  <Thumb $w={121} $h={15}>
                    <svg width="8" height="7" viewBox="0 0 8 7"><path d="M.5 0v7M3.500 0v7M6.500 0v7" stroke="#555" /></svg>
                  </Thumb>
                  <Push />
                  <ScrollButton aria-label="Scroll right"><SmallArrow turn={90} /></ScrollButton>
                </HorizontalScroll>
              </Listing>
              <Preview><PreviewLegend>预览</PreviewLegend></Preview>
            </Browse>
            <CheckRow><CheckBox type="checkbox" /><SongText>选择初始视图(E)</SongText></CheckRow>
            <Form>
              <FormLabel htmlFor="file-name"><SongText>文件名(N):</SongText></FormLabel>
              <Field>
                <FieldInput id="file-name" defaultValue="福建省地图" />
                <ArrowBox><Triangle /></ArrowBox>
              </Field>
              <ButtonPair>
                <PushButton $primary $width="65px"><SongText hotkey>打开(O)</SongText></PushButton>
                <PushButton $primary $width="14px" aria-label="Open options"><Triangle /></PushButton>
              </ButtonPair>
              <FormLabel htmlFor="file-type"><SongText>文件类型(T):</SongText></FormLabel>
              <Field $raised>
                <TypeSelect id="file-type"><option>DXF (*.dxf)</option></TypeSelect>
                <ArrowBox><Triangle /></ArrowBox>
              </Field>
              <PushButton>取消</PushButton>
            </Form>
          </div>
        </Split>
      </DialogBody>
    </DialogWindow>
  );
}

export default function App() {
  return (
    <Window>
      <GlobalStyle />
      <MenuBar>
        <MenuLogo>
          <svg width="6" height="16" viewBox="0 0 6 16"><path d="M0 1h3l3 4v10H0z" fill="#f5f5f5" stroke="#999" /><path d="M0 7l5 6H0z" fill="#f0b818" /><path d="M0 12h6v3H0z" fill="#24507e" /></svg>
        </MenuLogo>
        {menus.map((m) => <MenuItem key={m}>{m}</MenuItem>)}
        <WindowButtons>
          <WindowButton aria-label="Minimize"><svg width="8" height="8" viewBox="0 0 8 8"><path d="M1 6.500h6" stroke="#7b8fa8" strokeWidth="2" /></svg></WindowButton>
          <WindowButton aria-label="Restore"><svg width="9" height="8" viewBox="0 0 9 8"><path d="M3 3V1h5.500v4H6M.7 3.500h5v4h-5z" fill="none" stroke="#7b8fa8" strokeWidth="1.300" /></svg></WindowButton>
          <WindowButton aria-label="Close"><svg width="8" height="8" viewBox="0 0 8 8"><path d="M1 1l6 6M7 1L1 7" stroke="#7b8fa8" strokeWidth="2" /></svg></WindowButton>
        </WindowButtons>
      </MenuBar>

      <ToolRow>
        <Toolbar $clipped>
          <Tools names="page open save | print preview publish globe | cut copy paste brush block | undo v redo v | pan zoomRt zoomWin zoomPrev | props design palettes sheets markup calc | help" />
        </Toolbar>
        <Toolbar>
          <Grip />
          <Tools names="textStyle" /><Combo width={100} label="Text style" />
          <Tools names="| dimStyle" /><Combo width={100} label="Dimension style" />
          <Tools names="| tableStyle" /><Combo width={100} label="Table style" />
        </Toolbar>
        <Toolbar>
          <Grip />
          <Tools names="track from | endpoint midpoint intersect apparent extend | center quadrant tangent | perp parallel insert node | nearest snapNone | snapSet" />
        </Toolbar>
        <Toolbar>
          <Grip />
          <Tools names="clip | xclip attach attach2 attach | img imgClip imgAdjust imgQuality imgTrans imgFrame" />
        </Toolbar>
      </ToolRow>

      <ToolRow>
        <Toolbar $clipped>
          <ComboBox $width={175} $active>
            <WorkspaceSelect aria-label="Workspace"><option>AutoCAD 经典</option></WorkspaceSelect>
            <ArrowBox><Triangle /></ArrowBox>
          </ComboBox>
          <Tools names="gear home" />
        </Toolbar>
        <Toolbar>
          <Grip />
          <Tools names="layers" />
          <ComboBox $width={300}>
            <LayerIcons>
              {['bulb', 'sun', 'sunVp', 'lock', 'swatch'].map((n) => <Icon key={n} name={n} />)}
            </LayerIcons>
            <ComboSelect aria-label="Layer"><option>0</option></ComboSelect>
            <ArrowBox><Triangle color="#a0a0a0" /></ArrowBox>
          </ComboBox>
          <Tools names="layerMake layerPrev" />
        </Toolbar>
        <Toolbar>
          <Grip />
          <Combo width={150} label="Color" /><Divider />
          <Combo width={160} label="Linetype" /><Divider />
          <Combo width={125} label="Lineweight" /><Divider />
          <Combo width={120} label="Plot style" />
        </Toolbar>
        <Toolbar>
          <Grip />
          <Tools names="distance area mass | list locate" />
        </Toolbar>
        <Toolbar>
          <Grip />
          <Tools names="zWindow zDynamic zScale zCenter zObject | zIn zOut | zAll zExtents" />
        </Toolbar>
      </ToolRow>

      <Middle>
        <Dock $side="left">
          <DockBar $side="left">
            <DockGrip />
            <DockTools names="dLine dXline dPoly dPolygon dRect dArc dCircle dCloud dSpline dDot dDot dInsert dDot - dHatch dHatch dRegion dTable dDot" />
          </DockBar>
        </Dock>
        <Document>
          <Canvas>
            <svg width="150" height="160" viewBox="0 -4 150 160" fill="none" stroke="#000">
              <path d="M2.500 130.500h14v14h-14zM9.500 130V59M17 137.500h70" strokeWidth="1" />
              <path d="M2.500 58.500h14L9.500 38zM87.500 130.500v14l20-7z" />
              <path d="M7 58l2.500-18L12 58M88 135l18 2.500L88 140" stroke="#888" />
              <text x="3" y="26" fontFamily="Lato, sans-serif" fontWeight="300" fontSize="28" fill="#000" stroke="none">Y</text>
              <text x="122" y="147" fontFamily="Lato, sans-serif" fontWeight="300" fontSize="28" fill="#000" stroke="none">X</text>
            </svg>
            <OpenDialog />
          </Canvas>
          <TabStrip>
            {pageSteps.map((d, i) => (
              <PageButton key={d} aria-label={`Layout step ${i + 1}`}><svg width="12" height="10" viewBox="0 0 12 10"><path d={d} fill="#000" stroke="#000" /></svg></PageButton>
            ))}
            <LayoutTab $active>模型</LayoutTab>
            <LayoutTab>布局1</LayoutTab>
            <LayoutTab>布局2</LayoutTab>
          </TabStrip>
        </Document>
        <Dock $side="right">
          <DockBar $side="right">
            <DockGrip />
            <DockTools names="erase copyObj mirror offset array move rotate scale stretch trim extendObj breakPt breakObj join chamfer fillet explode" />
          </DockBar>
          <DockBar $side="right">
            <DockGrip />
            <DockTools names="front back above under" />
          </DockBar>
        </Dock>
      </Middle>

      <CommandPanel>
        <Splitter />
        <CommandLog><LogPrompt>命令</LogPrompt>: _open</CommandLog>
        <CommandLine>
          <CommandInput aria-label="Command" />
          <CommandScroll>
            <SmallArrow turn={-90} />
            <CommandThumbGap />
            <Thumb $w={15} $h={16} />
            <Push />
            <SmallArrow turn={90} />
          </CommandScroll>
        </CommandLine>
      </CommandPanel>

      <svg width="0" height="0" aria-hidden="true">
        <defs>
          <linearGradient id="metal" x1="0" y1="0" x2="1" y2="1"><stop offset="0" stopColor="#fafafa" /><stop offset="1" stopColor="#a8a8a8" /></linearGradient>
          <linearGradient id="desk" x1="0" y1="1" x2="1" y2="0"><stop offset="0" stopColor="#1848c8" /><stop offset=".6" stopColor="#3f7df0" /><stop offset="1" stopColor="#8fb6fa" /></linearGradient>
        </defs>
      </svg>
    </Window>
  );
}
